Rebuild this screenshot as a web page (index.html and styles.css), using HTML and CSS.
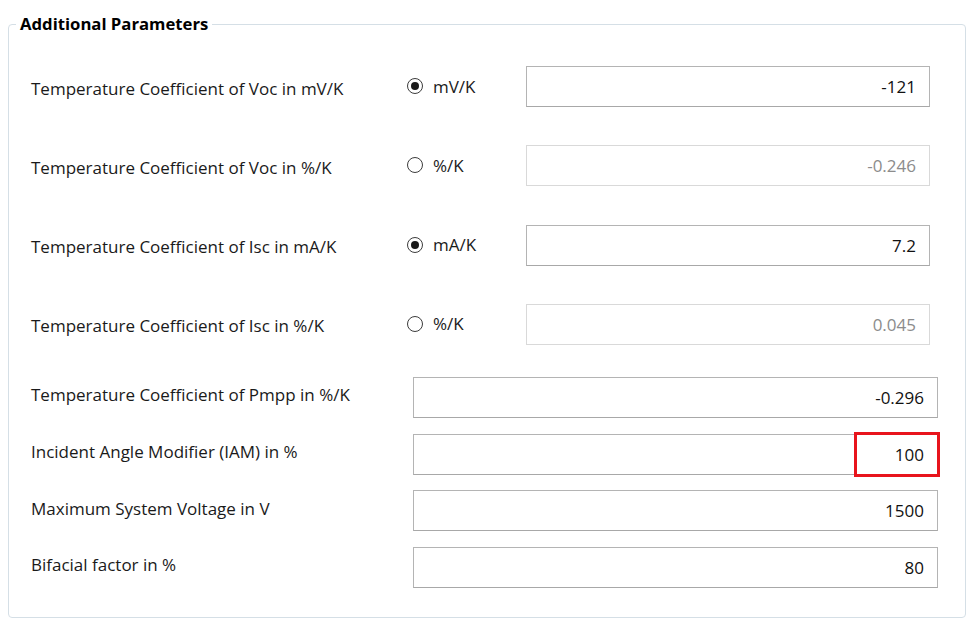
FILE: index.html
```html
<!DOCTYPE html>
<html>
<head>
<meta charset="utf-8">
<link rel="stylesheet" href="styles.css">
</head>
<body>
<div class="page">
  <fieldset class="group">
    <legend class="group-title">Additional Parameters</legend>
    <div class="sect-a">
      <div class="label">Temperature Coefficient of Voc in mV/K</div>
      <div class="radio"><span class="dot checked"></span><span class="unit">mV/K</span></div>
      <div class="box">-121</div>

      <div class="label">Temperature Coefficient of Voc in %/K</div>
      <div class="radio"><span class="dot"></span><span class="unit">%/K</span></div>
      <div class="box disabled">-0.246</div>

      <div class="label">Temperature Coefficient of Isc in mA/K</div>
      <div class="radio"><span class="dot checked"></span><span class="unit">mA/K</span></div>
      <div class="box">7.2</div>

      <div class="label">Temperature Coefficient of Isc in %/K</div>
      <div class="radio"><span class="dot"></span><span class="unit">%/K</span></div>
      <div class="box disabled">0.045</div>
    </div>
    <div class="sect-b">
      <div class="label-b">Temperature Coefficient of Pmpp in %/K</div>
      <div class="box">-0.296</div>

      <div class="label-b">Incident Angle Modifier (IAM) in %</div>
      <div class="box"><span class="value">100</span><span class="highlight"></span></div>

      <div class="label-b">Maximum System Voltage in V</div>
      <div class="box">1500</div>

      <div class="label-b">Bifacial factor in %</div>
      <div class="box">80</div>
    </div>
  </fieldset>
</div>
</body>
</html>
```

FILE: styles.css
```css
html, body {
  margin: 0;
  padding: 0;
  background: #ffffff;
}
body {
  font-family: "Open Sans", "Noto Sans", sans-serif;
  font-size: 17px;
  color: #1a1a1a;
}
.page {
  padding: 14px 4px 0 8px;
  width: 958px;
}
.group {
  margin: 0;
  padding: 0 0 27px 0;
  border: 1px solid #d5dfe6;
  border-radius: 4px;
  width: 958px;
  box-sizing: border-box;
  height: 604px;
}
.group-title {
  margin-left: 7px;
  padding: 0 4px;
  font-weight: 700;
  font-size: 16.7px;
  line-height: 20px;
  color: #000;
}
.sect-a {
  display: grid;
  grid-template-columns: 376px 119px 404px;
  grid-auto-rows: 41px;
  row-gap: 38.3px;
  margin-top: 32px;
  padding-left: 22px;
}
.sect-b {
  display: grid;
  grid-template-columns: 382px 525px;
  grid-auto-rows: 41px;
  row-gap: 15.7px;
  margin-top: 32px;
  padding-left: 22px;
}
.label {
  display: flex;
  align-items: center;
  padding-top: 3px;
  white-space: nowrap;
}
.label-b {
  display: flex;
  align-items: center;
  padding-bottom: 5px;
  white-space: nowrap;
}
.radio {
  display: flex;
  align-items: center;
  gap: 10px;
  padding-bottom: 1px;
}
.dot {
  width: 16px;
  height: 16px;
  box-sizing: border-box;
  border: 1px solid #3c3c3c;
  border-radius: 50%;
  display: flex;
  align-items: center;
  justify-content: center;
  flex: none;
}
.dot.checked::after {
  content: "";
  width: 8px;
  height: 8px;
  border-radius: 50%;
  background: #1a1a1a;
}
.unit {
  color: #1a1a1a;
}
.box {
  box-sizing: border-box;
  border: 1px solid #b4b4b4;
  border-bottom-color: #a8a8a8;
  display: flex;
  align-items: center;
  justify-content: flex-end;
  padding-right: 13px;
  color: #111;
  position: relative;
}
.box.disabled {
  border-color: #d9d9d9;
  color: #8c8c8c;
}
.highlight {
  position: absolute;
  right: -3px;
  top: -3px;
  width: 86px;
  height: 45px;
  box-sizing: border-box;
  border: 3px solid #e8141c;
}
```
